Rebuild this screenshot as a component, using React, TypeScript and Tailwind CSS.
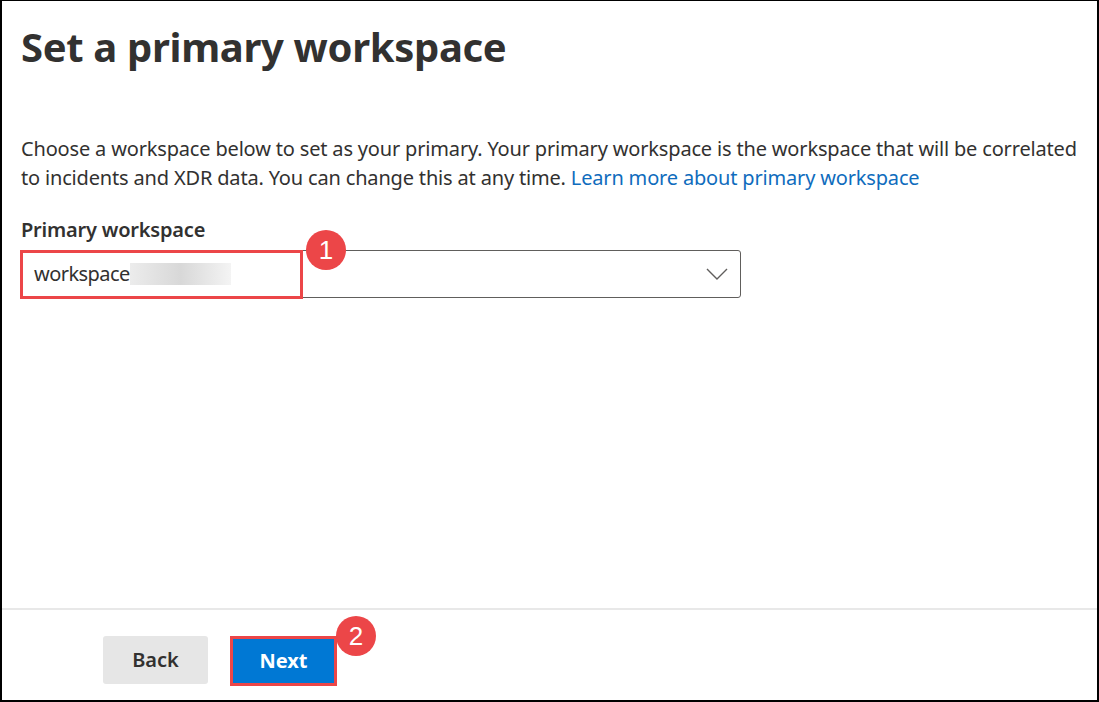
import React from "react";

const font = { fontFamily: '"Noto Sans", "Open Sans", Arial, sans-serif' };

function Badge({ n, className }: { n: string; className: string }) {
  return (
    <div
      className={`absolute w-[40px] h-[40px] rounded-full bg-[#ec4648] text-white flex items-center justify-center text-[26px] leading-none ${className}`}
      style={{ fontFamily: '"Liberation Sans", Arial, sans-serif' }}
    >
      {n}
    </div>
  );
}

export default function App() {
  return (
    <div
      className="w-[1099px] h-[702px] bg-white border-l-2 border-t border-r-2 border-b-2 border-black flex flex-col text-[#323130] relative overflow-hidden"
      style={font}
    >
      <div className="pl-[19px] pt-[18px]">
        <h1 className="text-[40px] leading-[56px] font-bold tracking-[-0.33px] text-[#323130]">
          Set a primary workspace
        </h1>
        <p className="mt-[59px] text-[20px] leading-[29px] pr-[18px] tracking-[-0.17px]">
          Choose a workspace below to set as your primary. Your primary workspace is the workspace that will be correlated
          to incidents and XDR data. You can change this at any time.{" "}
          <span className="text-[#0f6cbd]">Learn more about primary workspace</span>
        </p>
        <div className="mt-[24px] text-[20px] leading-[28px] font-semibold tracking-[-0.2px]">Primary workspace</div>
        <div className="relative mt-[6px] w-[720px] h-[48px] border border-[#605e5c] rounded-[3px] flex items-center pl-[12px] pr-[12px]">
          <span className="text-[20px] tracking-[-0.55px]">workspace</span>
          <span className="ml-[0px] w-[101px] h-[22px] bg-gradient-to-r from-[#ececec] via-[#d8d8d8] to-[#f4f4f4]" />
          <div className="flex-1" />
          <svg width="22" height="12" viewBox="0 0 22 12">
            <path d="M1 1 L11 11 L21 1" fill="none" stroke="#605e5c" strokeWidth="1.4" />
          </svg>
          <div className="absolute left-[-2px] top-[-1px] w-[283px] h-[49px] border-[3px] border-[#ec4648]" />
          <Badge n="1" className="left-[284px] top-[-21px]" />
        </div>
      </div>
      <div className="flex-1" />
      <div className="h-[92px] border-t-2 border-[#e8e8e8] pl-[101px] pt-[26px] flex items-start gap-[22px]">
        <button className="w-[105px] h-[48px] bg-[#e6e6e6] rounded-[3px] text-[20px] font-semibold text-[#323130]">
          Back
        </button>
        <div className="relative">
          <button className="w-[107px] h-[50px] bg-[#0078d4] text-white text-[20px] font-bold border-[3px] border-[#ec4648]">
            Next
          </button>
          <Badge n="2" className="left-[106px] top-[-20px]" />
        </div>
      </div>
    </div>
  );
}
